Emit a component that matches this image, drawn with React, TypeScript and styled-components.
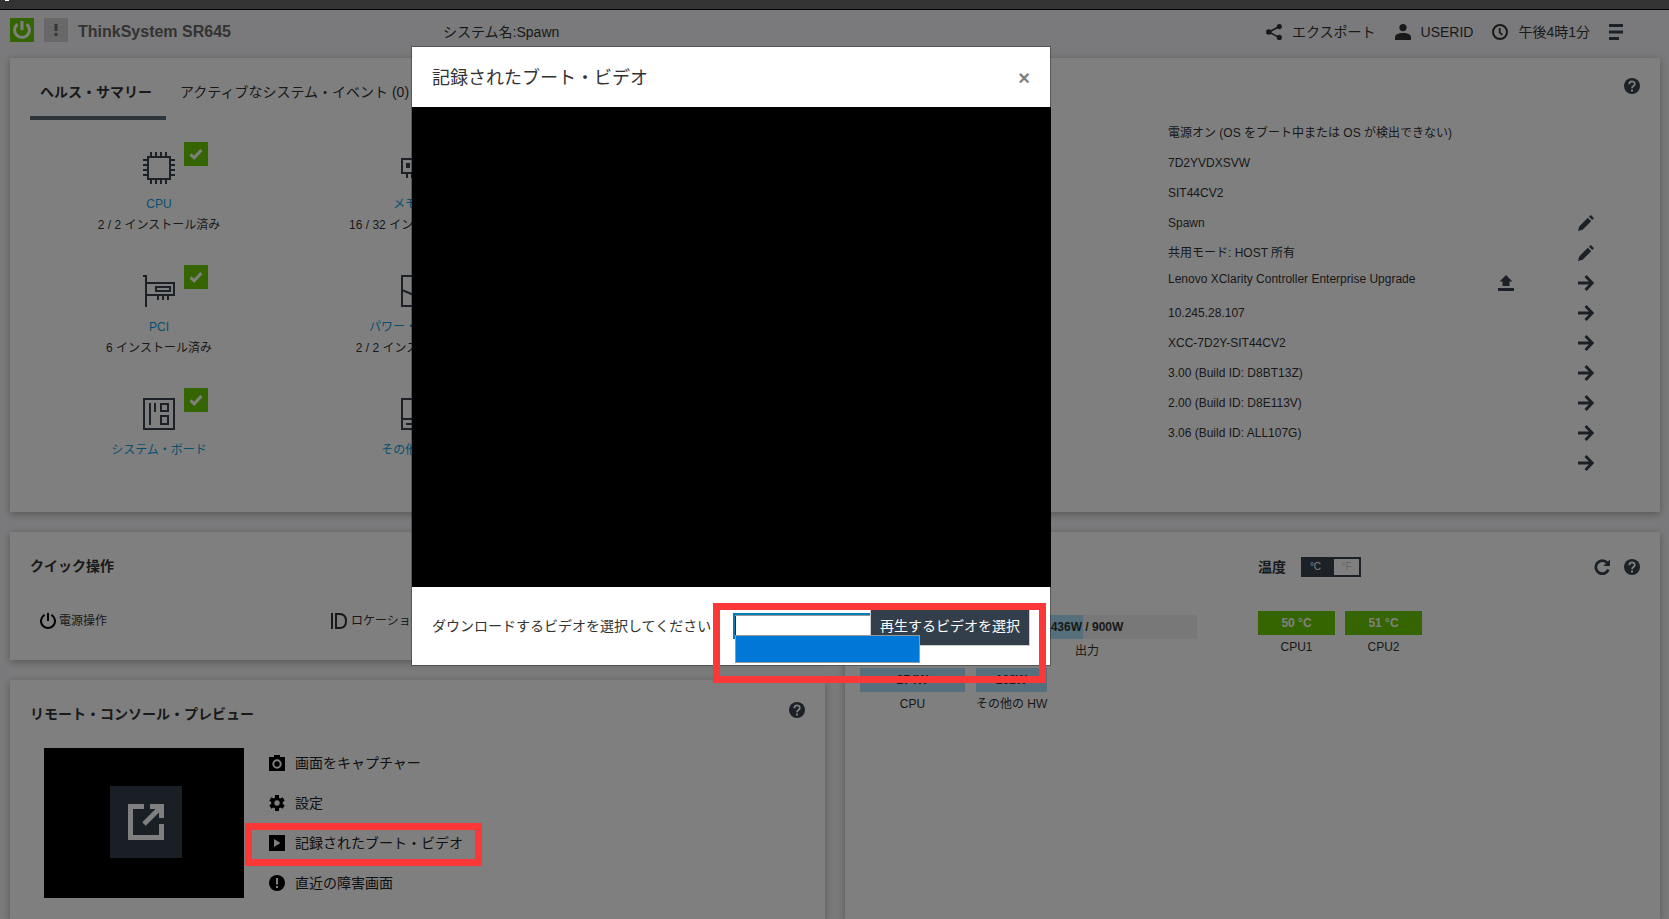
import React from 'react';
import styled, { createGlobalStyle } from 'styled-components';

const ink = '#333333';
const slate = '#38434f';
const green = '#6aca00';
const link = '#0d9fe0';
const callout = '#fb3838';

const GlobalStyle = createGlobalStyle`
  * { box-sizing: border-box; }
  body {
    margin: 0;
    background: #f5f5f8;
    color: ${ink};
    font-family: "Liberation Sans", "Noto Sans CJK JP", sans-serif;
    font-size: 14px;
    line-height: 20px;
  }
  h1, h2, ul, p { margin: 0; padding: 0; }
  ul { list-style: none; }
  button { padding: 0; border: 0; background: none; color: inherit; font: inherit; cursor: pointer; }
  a { text-decoration: none; }
  svg { display: block; flex: none; }
`;

const Page = styled.div`
  display: flex;
  flex-direction: column;
  height: 100vh;
  overflow: hidden;
`;

const BrowserEdge = styled.div`
  flex: none;
  height: 10px;
  background: #666669;
  border-bottom: 1px solid #000;
`;

const EdgeMark = styled.div`
  position: absolute;
  z-index: 40;
  top: 0;
  left: 5px;
  width: 4px;
  height: 1px;
  background: #fff;
`;

const Header = styled.header`
  flex: none;
  display: grid;
  grid-template-columns: 433px 1fr auto;
  align-items: center;
  height: 48px;
  padding: 0 44px 4px 10px;
`;

const Brand = styled.div`
  display: flex;
  align-items: center;
  gap: 10px;
`;

const StatusTile = styled.span<{ $color: string }>`
  display: flex;
  align-items: center;
  justify-content: center;
  width: 24px;
  height: 24px;
  margin-bottom: 4px;
  background: ${(p) => p.$color};
`;

const ProductName = styled.h1`
  font-size: 16px;
  line-height: 20px;
  color: #666;
`;

const HeaderActions = styled.nav`
  display: flex;
  align-items: center;
  gap: 19px;
`;

const IconText = styled.button<{ $gap?: number }>`
  display: flex;
  align-items: center;
  gap: ${(p) => p.$gap ?? 10}px;
  white-space: nowrap;
`;

const Main = styled.main`
  flex: 1;
  min-height: 0;
  display: flex;
  flex-direction: column;
  gap: 20px;
  padding: 0 9px 0 10px;
`;

const Card = styled.section`
  background: #fff;
  box-shadow: 0 2px 8px rgba(0, 0, 0, 0.3);
  padding: 0 20px;
`;

const SummaryCard = styled(Card)`
  flex: none;
  display: grid;
  grid-template-columns: repeat(2, minmax(0, 1fr));
  gap: 62px;
  height: 454px;
  padding-top: 14px;
`;

const Tabs = styled.div`
  display: flex;
  gap: 4px;
`;

const Tab = styled.button<{ $active?: boolean }>`
  height: 48px;
  padding: 0 14px 4px 10px;
  line-height: 40px;
  white-space: nowrap;
  font-weight: ${(p) => (p.$active ? 700 : 400)};
  border-bottom: 4px solid ${(p) => (p.$active ? '#5a6a77' : 'transparent')};
`;

const HealthGrid = styled.div`
  display: grid;
  grid-template-columns: repeat(3, 1fr);
  grid-auto-rows: 123px;
  padding-top: 32px;
`;

const HealthItem = styled.div<{ $column: number }>`
  grid-column: ${(p) => p.$column};
  display: flex;
  flex-direction: column;
  align-items: center;
  gap: 1px;
  font-size: 12px;
`;

const HealthIcon = styled.div`
  position: relative;
  margin-bottom: 9px;
  color: ${slate};
`;

const OkBadge = styled.span`
  position: absolute;
  top: -10px;
  left: 41px;
  display: flex;
  align-items: center;
  justify-content: center;
  width: 24px;
  height: 24px;
  background: ${green};
`;

const HealthLink = styled.a`
  color: ${link};
`;

const Details = styled.div`
  display: flex;
  flex-direction: column;
  color: ${slate};
`;

const DetailsHead = styled.div`
  display: flex;
  justify-content: flex-end;
  height: 46px;
  padding-top: 6px;
`;

const DetailList = styled.ul`
  padding: 0 46px 0 302px;
  color: ${ink};
  font-size: 12px;
`;

const DetailRow = styled.li`
  display: grid;
  grid-template-columns: minmax(0, 1fr) 16px 16px;
  column-gap: 64px;
  align-items: center;
  height: 30px;
`;

const DetailValue = styled.span<{ $raised?: boolean }>`
  grid-column: 1;
  line-height: 22px;
  white-space: nowrap;
  align-self: ${(p) => (p.$raised ? 'start' : 'center')};
`;

const IconButton = styled.button<{ $column?: number }>`
  grid-column: ${(p) => p.$column ?? 'auto'};
  width: 16px;
  height: 16px;
  color: ${slate};
`;

const Columns = styled.div`
  flex: 1;
  min-height: 0;
  display: grid;
  grid-template-columns: repeat(2, minmax(0, 1fr));
  gap: 20px;
`;

const Stack = styled.div`
  display: flex;
  flex-direction: column;
  gap: 20px;
`;

const CardTitle = styled.h2`
  font-size: 14px;
  line-height: 24px;
`;

const QuickCard = styled(Card)`
  height: 128px;
  padding-top: 22px;
`;

const QuickActions = styled.div`
  display: grid;
  grid-template-columns: 291px 1fr;
  padding: 33px 10px 0;
  font-size: 12px;
`;

const ConsoleCard = styled(Card)`
  flex: 1;
  padding-top: 22px;
`;

const CardHead = styled.div`
  display: flex;
  justify-content: space-between;
  align-items: flex-start;
  height: 24px;
`;

const ConsoleBody = styled.div`
  display: flex;
  gap: 25px;
  padding: 17px 14px 0;
`;

const Preview = styled.div`
  display: flex;
  align-items: center;
  justify-content: center;
  width: 200px;
  height: 150px;
  margin-top: 5px;
  padding: 0 0 2px 4px;
  background: #000;
`;

const LaunchButton = styled.button`
  display: flex;
  align-items: center;
  justify-content: center;
  width: 72px;
  height: 72px;
  background: #343f4d;
  color: #fff;
`;

const ConsoleMenu = styled.ul`
  display: flex;
  flex-direction: column;
  color: #222;
`;

const ConsoleMenuItem = styled.li`
  position: relative;
  display: flex;
  align-items: center;
  align-self: flex-start;
  height: 40px;
`;

const MenuCallout = styled.div`
  position: absolute;
  z-index: 30;
  inset: 0 -19px -3px -24px;
  border: 7px solid ${callout};
`;

const UsageCard = styled(Card)`
  display: grid;
  grid-template-columns: 352px 1fr;
  gap: 46px;
  padding: 25px 20px 0 15px;
`;

const PowerPanel = styled.div`
  display: flex;
  flex-direction: column;
  gap: 7px;
  padding-top: 58px;
  font-size: 12px;
`;

const BarRow = styled.div<{ $end?: boolean; $gap?: number }>`
  display: flex;
  justify-content: ${(p) => (p.$end ? 'flex-end' : 'flex-start')};
  gap: ${(p) => p.$gap ?? 10}px;
  padding-right: 15px;
`;

const Gauge = styled.div<{ $width: number }>`
  width: ${(p) => p.$width}px;
  text-align: center;
  white-space: nowrap;
`;

const GaugeBar = styled.div<{ $fill?: number }>`
  height: 24px;
  margin-bottom: 2px;
  line-height: 24px;
  font-weight: 700;
  background: linear-gradient(to right, #abe1f8 ${(p) => p.$fill ?? 100}%, #f0f0f0 ${(p) => p.$fill ?? 100}%);
`;

const TempPanel = styled.div`
  font-size: 12px;
`;

const TempHead = styled.div`
  display: flex;
  align-items: center;
  height: 20px;
`;

const UnitToggle = styled.div`
  display: flex;
  width: 60px;
  height: 20px;
  margin-left: 15px;
  border: 2px solid ${slate};
`;

const Unit = styled.button<{ $on?: boolean }>`
  flex: 1;
  padding-right: ${(p) => (p.$on ? 6 : 0)}px;
  font-size: 10px;
  line-height: 16px;
  background: ${(p) => (p.$on ? slate : '#fff')};
  color: ${(p) => (p.$on ? '#fff' : '#ccc')};
`;

const HeadTools = styled.div`
  display: flex;
  gap: 14px;
  margin-left: auto;
`;

const TempRow = styled.div`
  display: flex;
  gap: 10px;
  padding-top: 34px;
`;

const TempBar = styled.div`
  height: 24px;
  margin-bottom: 2px;
  line-height: 24px;
  font-weight: 700;
  background: ${green};
  color: #fff;
`;

const Backdrop = styled.div`
  position: fixed;
  z-index: 10;
  inset: 0;
  background: rgba(0, 0, 0, 0.5);
`;

const Dialog = styled.div`
  position: absolute;
  z-index: 20;
  top: 46px;
  left: 411px;
  width: 640px;
  background: #fff;
  background-clip: padding-box;
  border: 1px solid rgba(0, 0, 0, 0.3);
`;

const DialogHead = styled.div`
  display: flex;
  align-items: center;
  justify-content: space-between;
  height: 60px;
  padding: 2px 20px 0;
`;

const DialogTitle = styled.h2`
  font-size: 18px;
  line-height: 26px;
  font-weight: 400;
`;

const CloseButton = styled.button`
  font-size: 20px;
  line-height: 20px;
  font-weight: 700;
  color: #808080;
`;

const VideoArea = styled.div`
  height: 480px;
  margin-right: -1px;
  background: #000;
`;

const DialogFoot = styled.div`
  position: relative;
  display: flex;
  align-items: center;
  height: 78px;
  padding: 0 20px;
`;

const SelectLabel = styled.label`
  flex: 1;
  white-space: nowrap;
`;

const SelectWrap = styled.div`
  position: relative;
  width: 137px;
  height: 26px;
`;

const VideoSelect = styled.select`
  appearance: none;
  display: block;
  width: 137px;
  height: 26px;
  border: 2px solid #007dbc;
  border-radius: 0;
  border-right: 0;
  background: #fff;
  box-shadow: inset 0 1px 0 #999, inset 1px 0 0 #222;
`;

const OptionList = styled.div`
  position: absolute;
  z-index: 2;
  top: 22px;
  left: 2px;
  width: 185px;
  height: 28px;
  border: 1px solid #999;
  background: #0078d7;
`;

const PlayButton = styled.button`
  height: 40px;
  width: 160px;
  border: 1px solid #ccc;
  background: #323e4a;
  color: #fff;
  white-space: nowrap;
`;

const SelectCallout = styled.div`
  position: absolute;
  z-index: 3;
  inset: 16px 4px -18px 301px;
  border: 7px solid ${callout};
  pointer-events: none;
`;

type IconProps = { size?: number; children: React.ReactNode; box?: number };
const Icon = ({ size = 16, box = 16, children }: IconProps) => (
  <svg width={size} height={size} viewBox={`0 0 ${box} ${box}`} fill="none" stroke="currentColor" strokeWidth="2" aria-hidden="true">
    {children}
  </svg>
);
const solid = { fill: 'currentColor', stroke: 'none' };

const PowerIcon = ({ color = 'currentColor' }: { color?: string }) => (
  <Icon>
    <path d="M4.6 1.9A7 7 0 1 0 11.4 1.9" stroke={color} />
    <path d="M8 0v8" stroke={color} />
  </Icon>
);
const PowerOnIcon = () => (
  <Icon size={18} box={18}>
    <path d="M4.500 3.200A7.400 7.400 0 1 0 13.500 3.200M9 0v9" stroke="#fff" strokeWidth="3" />
  </Icon>
);
const AlertMark = () => (
  <Icon><path d="M6.5 2h3v7h-3zM6.5 11h3v3h-3z" fill="#6c6c6c" stroke="none" /></Icon>
);
const ShareIcon = () => (
  <Icon><g {...solid}><circle cx="2.8" cy="8" r="2.8" /><circle cx="13.3" cy="2.6" r="2.6" /><circle cx="13.3" cy="13.4" r="2.6" /></g><path d="M13 2.7L3 8l10 5.4" strokeWidth="1.6" /></Icon>
);
const UserIcon = () => (
  <Icon><g {...solid}><circle cx="8" cy="3.6" r="3.6" /><path d="M0 16v-2.6C0 10.500 3 9 8 9s8 1.500 8 4.400V16z" /></g></Icon>
);
const ClockIcon = () => (
  <Icon><circle cx="8" cy="8" r="7" /><path d="M7.700 4v4.300l2.600 2.500" strokeWidth="1.800" /></Icon>
);
const MenuIcon = () => (
  <Icon><path d="M0 0h14v3H0zM0 6.500h14v3H0zM0 13h10v3H0z" {...solid} /></Icon>
);
const HelpIcon = () => (
  <Icon><circle cx="8" cy="8" r="8" {...solid} /><path d="M5.300 6.200C5.300 2.400 10.800 2.500 10.800 6c0 2-2.800 2.100-2.800 4.300" stroke="#fff" strokeWidth="1.800" /><path d="M7 11.600h2v2H7z" fill="#fff" stroke="none" /></Icon>
);
const PencilIcon = () => (
  <Icon><path d="M0 16l1.200-4.600L9.800 2.800l3.400 3.400-8.600 8.600zM11 1.800L12.800 0 16 3.200 14.200 5z" {...solid} /></Icon>
);
const ArrowIcon = () => (
  <Icon><path d="M0 8h14M7.500 1l6.800 7-6.800 7" strokeWidth="2.900" /></Icon>
);
const UploadIcon = () => (
  <Icon><path d="M8 0l6.500 6.500H11.500V11h-7V6.500h-3zM0 13h16v3H0z" {...solid} /></Icon>
);
const RefreshIcon = () => (
  <Icon><path d="M13.300 4A6.500 6.500 0 1 0 14.400 10.500" strokeWidth="2.800" /><path d="M16 .5V7H9.300z" {...solid} /></Icon>
);
const CheckIcon = () => (
  <svg width="14" height="12" viewBox="0 0 14 12" fill="none" aria-hidden="true"><path d="M1.500 6.300l3.700 3.500L12.400 2" stroke="#fff" strokeWidth="3" /></svg>
);
const LocateIcon = () => (
  <Icon><path d="M1 0v16M5 1h3.500c4 0 6.500 2.500 6.500 7s-2.500 7-6.500 7H5z" /></Icon>
);
const CameraIcon = () => (
  <Icon><path d="M0 2h5V0h6v2h5v14H0z" fill="#000" stroke="none" /><circle cx="8" cy="9" r="3.700" stroke="#fff" /></Icon>
);
const GearIcon = () => (
  <Icon><g stroke="#000" strokeWidth="4"><path d="M8 0v16M1.300 4l13.400 8M1.300 12l13.400-8" /></g><circle cx="8" cy="8" r="5.800" fill="#000" stroke="none" /><circle cx="8" cy="8" r="2.700" fill="#fff" stroke="none" /></Icon>
);
const PlayIcon = () => (
  <Icon><path d="M0 0h16v16H0z" fill="#000" stroke="none" /><path d="M5 4l6.500 4L5 12z" fill="#fff" stroke="none" /></Icon>
);
const FaultIcon = () => (
  <Icon><circle cx="8" cy="8" r="8" fill="#000" stroke="none" /><path d="M7 3h2v6.500H7zM7 11h2v2H7z" fill="#fff" stroke="none" /></Icon>
);
const LaunchIcon = () => (
  <Icon size={36} box={36}>
    <path d="M16 2.500H2.500v31h31V20" strokeWidth="5" />
    <path d="M16 20L32 4" strokeWidth="5" />
    <path d="M22 0h14v14h-5V5h-9z" {...solid} />
  </Icon>
);

const CpuIcon = () => (
  <Icon size={32} box={32}>
    <path d="M5 5h22v22H5z" />
    <path d="M8 0v4M13 0v4M18 0v4M23 0v4M8 28v4M13 28v4M18 28v4M23 28v4M0 8h4M0 13h4M0 18h4M0 23h4M28 8h4M28 13h4M28 18h4M28 23h4" />
  </Icon>
);
const MemoryIcon = () => (
  <Icon size={32} box={32}><path d="M1 7h30v14H1zM6 21v5M11 21v5M16 21v5M21 21v5M26 21v5" /><path d="M5 11h4v5H5zM13 11h4v5h-4zM21 11h4v5h-4z" {...solid} /></Icon>
);
const PciIcon = () => (
  <Icon size={32} box={32}><path d="M0 1h3v31M4 8h27v12H4M13 12h14v4H13zM15 20v5M20 20v5M25 20v5" /></Icon>
);
const PsuIcon = () => (
  <Icon size={32} box={32}><path d="M1 1h30v30H1zM1 15l14 6 16-6" /></Icon>
);
const BoardIcon = () => (
  <Icon size={32} box={32}><path d="M1 1h30v30H1zM7 5v22M12 5v9M18 6h7v7h-7zM18 18h7v8h-7z" /></Icon>
);
const ChassisIcon = () => (
  <Icon size={32} box={32}><path d="M1 1h30v30H1zM1 21h30M5 26h12" /></Icon>
);

const health = [
  { icon: <CpuIcon />, name: 'CPU', note: '2 / 2 インストール済み', column: 1 },
  { icon: <MemoryIcon />, name: 'メモリー', note: '16 / 32 インストール済み', column: 2 },
  { icon: <PciIcon />, name: 'PCI', note: '6 インストール済み', column: 1 },
  { icon: <PsuIcon />, name: 'パワー・サプライ', note: '2 / 2 インストール済み', column: 2 },
  { icon: <BoardIcon />, name: 'システム・ボード', note: '', column: 1 },
  { icon: <ChassisIcon />, name: 'その他の HW', note: '', column: 2 },
];

type Action = 'edit' | 'open';
const details: { value: string; action?: Action; upload?: boolean }[] = [
  { value: '電源オン (OS をブート中または OS が検出できない)' },
  { value: '7D2YVDXSVW' },
  { value: 'SIT44CV2' },
  { value: 'Spawn', action: 'edit' },
  { value: '共用モード: HOST 所有', action: 'edit' },
  { value: 'Lenovo XClarity Controller Enterprise Upgrade', action: 'open', upload: true },
  { value: '10.245.28.107', action: 'open' },
  { value: 'XCC-7D2Y-SIT44CV2', action: 'open' },
  { value: '3.00 (Build ID: D8BT13Z)', action: 'open' },
  { value: '2.00 (Build ID: D8E113V)', action: 'open' },
  { value: '3.06 (Build ID: ALL107G)', action: 'open' },
  { value: '', action: 'open' },
];

const consoleItems = [
  { icon: <CameraIcon />, text: '画面をキャプチャー' },
  { icon: <GearIcon />, text: '設定' },
  { icon: <PlayIcon />, text: '記録されたブート・ビデオ', marked: true },
  { icon: <FaultIcon />, text: '直近の障害画面' },
];

const temperatures = [
  { name: 'CPU1', value: '50 °C' },
  { name: 'CPU2', value: '51 °C' },
];

export default function App() {
  return (
    <>
      <GlobalStyle />
      <Page>
        <BrowserEdge />
        <EdgeMark />
        <Header>
          <Brand>
            <StatusTile $color={green}><PowerOnIcon /></StatusTile>
            <StatusTile $color="#d0d0d0"><AlertMark /></StatusTile>
            <ProductName>ThinkSystem SR645</ProductName>
          </Brand>
          <p>システム名:Spawn</p>
          <HeaderActions>
            <IconText><ShareIcon />エクスポート</IconText>
            <IconText><UserIcon />USERID</IconText>
            <IconText><ClockIcon />午後4時1分</IconText>
            <IconButton aria-label="menu"><MenuIcon /></IconButton>
          </HeaderActions>
        </Header>

        <Main>
          <SummaryCard>
            <div>
              <Tabs>
                <Tab $active>ヘルス・サマリー</Tab>
                <Tab>アクティブなシステム・イベント (0)</Tab>
              </Tabs>
              <HealthGrid>
                {health.map((item) => (
                  <HealthItem key={item.name} $column={item.column}>
                    <HealthIcon>
                      {item.icon}
                      <OkBadge><CheckIcon /></OkBadge>
                    </HealthIcon>
                    <HealthLink href="#">{item.name}</HealthLink>
                    <span>{item.note}</span>
                  </HealthItem>
                ))}
              </HealthGrid>
            </div>
            <Details>
              <DetailsHead>
                <IconButton aria-label="help"><HelpIcon /></IconButton>
              </DetailsHead>
              <DetailList>
                {details.map((d, i) => (
                  <DetailRow key={i}>
                    <DetailValue $raised={d.upload}>{d.value}</DetailValue>
                    {d.upload && <IconButton $column={2} aria-label="upload"><UploadIcon /></IconButton>}
                    {d.action && (
                      <IconButton $column={3} aria-label={d.action}>
                        {d.action === 'edit' ? <PencilIcon /> : <ArrowIcon />}
                      </IconButton>
                    )}
                  </DetailRow>
                ))}
              </DetailList>
            </Details>
          </SummaryCard>

          <Columns>
            <Stack>
              <QuickCard>
                <CardTitle>クイック操作</CardTitle>
                <QuickActions>
                  <IconText $gap={3}><PowerIcon color="#000" />電源操作</IconText>
                  <IconText $gap={4}><LocateIcon />ロケーション</IconText>
                </QuickActions>
              </QuickCard>
              <ConsoleCard>
                <CardHead>
                  <CardTitle>リモート・コンソール・プレビュー</CardTitle>
                  <IconButton aria-label="help"><HelpIcon /></IconButton>
                </CardHead>
                <ConsoleBody>
                  <Preview>
                    <LaunchButton aria-label="launch console"><LaunchIcon /></LaunchButton>
                  </Preview>
                  <ConsoleMenu>
                    {consoleItems.map((item) => (
                      <ConsoleMenuItem key={item.text}>
                        <IconText>{item.icon}{item.text}</IconText>
                        {item.marked && <MenuCallout />}
                      </ConsoleMenuItem>
                    ))}
                  </ConsoleMenu>
                </ConsoleBody>
              </ConsoleCard>
            </Stack>

            <UsageCard>
              <PowerPanel>
                <BarRow $end>
                  <Gauge $width={220}><GaugeBar $fill={48}>436W / 900W</GaugeBar>出力</Gauge>
                </BarRow>
                <BarRow $gap={11}>
                  <Gauge $width={105}><GaugeBar>274W</GaugeBar>CPU</Gauge>
                  <Gauge $width={71}><GaugeBar>162W</GaugeBar>その他の HW</Gauge>
                </BarRow>
              </PowerPanel>
              <TempPanel>
                <TempHead>
                  <CardTitle>温度</CardTitle>
                  <UnitToggle>
                    <Unit $on aria-pressed="true">°C</Unit>
                    <Unit aria-pressed="false">°F</Unit>
                  </UnitToggle>
                  <HeadTools>
                    <IconButton aria-label="refresh"><RefreshIcon /></IconButton>
                    <IconButton aria-label="help"><HelpIcon /></IconButton>
                  </HeadTools>
                </TempHead>
                <TempRow>
                  {temperatures.map((t) => (
                    <Gauge key={t.name} $width={77}><TempBar>{t.value}</TempBar>{t.name}</Gauge>
                  ))}
                </TempRow>
              </TempPanel>
            </UsageCard>
          </Columns>
        </Main>
      </Page>

      <Backdrop />
      <Dialog role="dialog" aria-labelledby="video-title">
        <DialogHead>
          <DialogTitle id="video-title">記録されたブート・ビデオ</DialogTitle>
          <CloseButton aria-label="close">×</CloseButton>
        </DialogHead>
        <VideoArea />
        <DialogFoot>
          <SelectLabel htmlFor="video">ダウンロードするビデオを選択してください</SelectLabel>
          <SelectWrap>
            <VideoSelect id="video"><option value="" /></VideoSelect>
            <OptionList />
          </SelectWrap>
          <PlayButton>再生するビデオを選択</PlayButton>
          <SelectCallout />
        </DialogFoot>
      </Dialog>
    </>
  );
}
